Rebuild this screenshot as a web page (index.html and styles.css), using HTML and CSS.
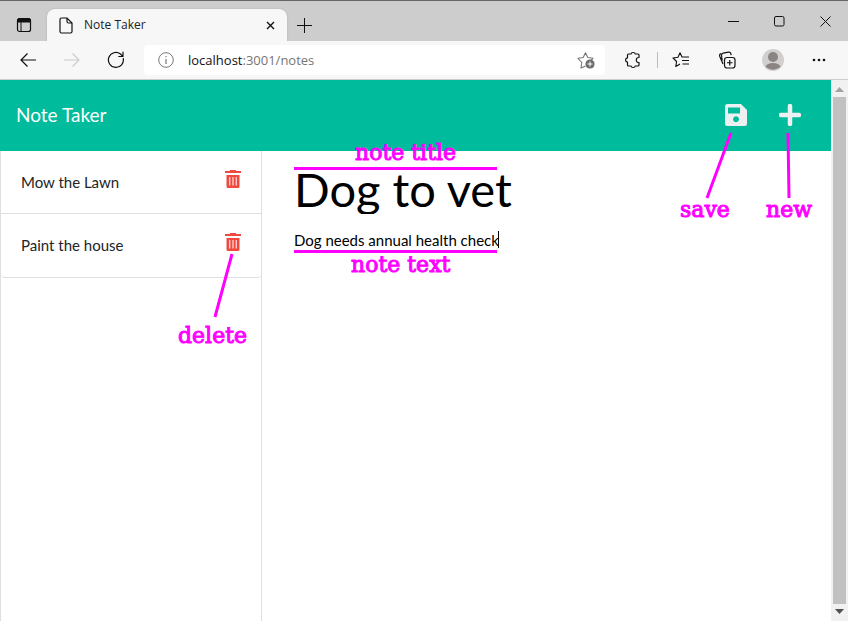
FILE: index.html
```html
<!DOCTYPE html>
<html lang="en">
<head>
<meta charset="utf-8">
<meta name="viewport" content="width=device-width, initial-scale=1">
<title>Note Taker</title>
<link rel="stylesheet" href="styles.css">
</head>
<body>
<div class="tabs">
  <button class="tab-menu" aria-label="Tab actions"><svg width="16" height="16" viewBox="0 0 16 16"><rect x="1.5" y="1.5" width="13" height="13" rx="2" fill="none" stroke="#111" stroke-width="1.2"/><path d="M1.500 5V3.500q0-2 2-2h9q2 0 2 2V5z" fill="#111" stroke="#111"/><path d="M5 5v9.500" stroke="#111"/></svg></button>
  <div class="tab">
    <svg width="14" height="17" viewBox="0 0 14 17" fill="none" stroke="#111" stroke-width="1.2"><path d="M2.500 1H8l5 5v8.500q0 1.500-1.500 1.500h-9Q1 16 1 14.500v-12Q1 1 2.500 1z"/><path d="M8 1v3.500Q8 6 9.500 6H13"/></svg>
    <span class="tab-name">Note Taker</span>
    <button class="tab-close" aria-label="Close tab"><svg width="9" height="9" viewBox="0 0 9 9"><path d="M1 1l7 7M8 1L1 8" stroke="#111" stroke-width="1.4"/></svg></button>
  </div>
  <button class="tab-new" aria-label="New tab"><svg width="15" height="15" viewBox="0 0 15 15"><path d="M7.500 0v15M0 7.500h15" stroke="#111"/></svg></button>
  <div class="window-buttons">
    <button aria-label="Minimize"><svg width="11" height="11" viewBox="0 0 11 11"><path d="M0 5.500h11" stroke="#111"/></svg></button>
    <button aria-label="Maximize"><svg width="11" height="11" viewBox="0 0 11 11"><rect x=".5" y=".5" width="9.500" height="9.500" rx="1.500" fill="none" stroke="#111"/></svg></button>
    <button aria-label="Close"><svg width="11" height="11" viewBox="0 0 11 11"><path d="M.5.5l10 10M10.500.5l-10 10" stroke="#111"/></svg></button>
  </div>
</div>
<div class="toolbar">
  <div class="nav-buttons">
    <button aria-label="Back"><svg width="18" height="18" viewBox="0 0 18 18" fill="none" stroke="#111" stroke-width="1.200"><path d="M17 9H2M8.500 2.500L2 9l6.500 6.500"/></svg></button>
    <button aria-label="Forward"><svg width="18" height="18" viewBox="0 0 18 18" fill="none" stroke="#ccc" stroke-width="1.200"><path d="M1 9h15M9.500 2.500L16 9l-6.500 6.500"/></svg></button>
    <button aria-label="Reload"><svg width="18" height="18" viewBox="0 0 18 18" fill="none" stroke="#111" stroke-width="1.200"><path d="M16.200 7.200A7.500 7.500 0 1 1 13.500 3L16 5.500M16 .8v4.700h-4.700"/></svg></button>
  </div>
  <div class="address">
    <svg width="16" height="16" viewBox="0 0 16 16"><circle cx="8" cy="8" r="7.300" fill="none" stroke="#777"/><path d="M8 7v5M8 4v1.300" stroke="#777" stroke-width="1.200"/></svg>
    <span class="url">localhost<span class="url-rest">:3001/notes</span></span>
    <button aria-label="Add to favorites"><svg width="18" height="18" viewBox="0 0 18 18"><path d="M8.500 15L4 17l.8-5.500L1 7.300l5.200-.8 2.300-4.800 2.300 4.800 5.200.8-2 2" fill="none" stroke="#777" stroke-width="1.100" stroke-linejoin="round"/><circle cx="13" cy="13" r="4.600" fill="#6c6c6c"/><path d="M13 10.500v5M10.500 13h5" stroke="#fff"/></svg></button>
  </div>
  <button class="tool" aria-label="Extensions"><svg width="18" height="18" viewBox="0 0 18 18"><path d="M4.500 3H7C7.300 1 11 1 11.300 3H14q1 0 1 1v2.500c-3.600-.4-3.600 5.400 0 5V14q0 1-1 1h-2.700c-.3 2-4 2-4.300 0H4.500q-1 0-1-1v-2.800c-2.600-.3-2.600-4.100 0-4.400V4q0-1 1-1z" fill="none" stroke="#111" stroke-width="1.200" stroke-linejoin="round"/></svg></button>
  <span class="divider"></span>
  <button class="tool" aria-label="Favorites"><svg width="18" height="18" viewBox="0 0 18 18" fill="none" stroke="#111" stroke-width="1.100"><path d="M8 13l-4.200 2.500.8-5L1 7l5-.7L8 1.700l2 4.300h7M10 9.500h7M10.500 13h6.500" stroke-linejoin="round"/></svg></button>
  <button class="tool" aria-label="Collections"><svg width="18" height="18" viewBox="0 0 18 18" fill="none" stroke="#111" stroke-width="1.200"><rect x="6.500" y="6.500" width="10.500" height="10.500" rx="2.500"/><path d="M11.750 9v5.500M9 11.750h5.500M5 13L1.800 5.500Q1 3.300 3 2.600M4.200 9.500L3.500 4.500q-.2-2 1.700-2.400L10.500 1.200q2-.3 2.400 1.600l.3 1.400"/></svg></button>
  <button class="tool" aria-label="Profile"><svg width="22" height="22" viewBox="0 0 22 22"><circle cx="11" cy="11" r="11" fill="#d2d0ce"/><circle cx="11" cy="8" r="5" fill="#8a8583"/><path d="M3.500 17.500Q5 14 11 14t7.500 3.500A10.500 10.500 0 0 1 3.500 17.500z" fill="#8a8583"/></svg></button>
  <button class="tool" aria-label="More"><svg width="14" height="4" viewBox="0 0 14 4" fill="#111"><circle cx="2" cy="2" r="1.300"/><circle cx="7" cy="2" r="1.300"/><circle cx="12" cy="2" r="1.300"/></svg></button>
</div>
<div class="viewport">
  <div class="page">
    <header class="navbar">
      <a class="brand" href="#">Note Taker</a>
      <div class="actions">
        <div class="anchor">
          <button aria-label="Save note"><svg width="22" height="22" viewBox="0 0 22 22"><path fill-rule="evenodd" d="M2.500 0H16l6 6v13.500q0 2.500-2.500 2.500h-17Q0 22 0 19.500v-17Q0 0 2.500 0zM3 3.500v6h12v-6zM11 12.300a3 3 0 1 0 .01 0z" fill="#ecf0f1"/></svg></button>
          <svg class="pointer pointer-save" width="30" height="70"><path d="M26 2L2 67"/></svg>
          <span class="note-label label-save">save</span>
        </div>
        <div class="anchor">
          <button aria-label="New note"><svg width="22" height="22" viewBox="0 0 22 22"><path d="M11 2v18M2 11h18" stroke="#ecf0f1" stroke-width="4.500" stroke-linecap="round"/></svg></button>
          <svg class="pointer pointer-new" width="6" height="70"><path d="M2 2l1 65"/></svg>
          <span class="note-label label-new">new</span>
        </div>
      </div>
    </header>
    <main class="columns">
      <aside class="sidebar">
        <ul class="notes">
          <li><span>Mow the Lawn</span><div class="anchor"><button aria-label="Delete Mow the Lawn"><svg width="16" height="18" viewBox="0 0 16 18"><path fill-rule="evenodd" d="M0 1h5V0h6v1h5v2H0zM1.500 5h13v11.500q0 1.500-1.500 1.500H3q-1.500 0-1.500-1.500zM4.300 7v8.500h1V7zM7.500 7v8.500h1V7zM10.700 7v8.500h1V7z" fill="#f1493e"/></svg></button></div></li>
          <li><span>Paint the house</span><div class="anchor"><button aria-label="Delete Paint the house"><svg width="16" height="18" viewBox="0 0 16 18"><path fill-rule="evenodd" d="M0 1h5V0h6v1h5v2H0zM1.500 5h13v11.500q0 1.500-1.500 1.500H3q-1.500 0-1.500-1.500zM4.300 7v8.500h1V7zM7.500 7v8.500h1V7zM10.700 7v8.500h1V7z" fill="#f1493e"/></svg></button>
            <svg class="pointer pointer-delete" width="22" height="68"><path d="M19 2L2 65"/></svg>
            <span class="note-label label-delete">delete</span></div></li>
        </ul>
      </aside>
      <section class="editor">
        <div class="field">
          <input class="title" aria-label="Note title" value="Dog to vet">
          <span class="rule rule-title"></span><span class="note-label label-title">note title</span>
        </div>
        <div class="field">
          <textarea class="body-text" rows="1" aria-label="Note text">Dog needs annual health check</textarea>
          <span class="caret"></span><span class="rule rule-text"></span><span class="note-label label-text">note text</span>
        </div>
      </section>
    </main>
  </div>
  <div class="scrollbar">
    <svg width="9" height="5" viewBox="0 0 9 5"><path d="M0 5L4.500 0 9 5z" fill="#a3a3a3"/></svg>
    <span class="thumb"></span>
    <svg width="9" height="5" viewBox="0 0 9 5"><path d="M0 0h9L4.500 5z" fill="#505050"/></svg>
  </div>
</div>
</body>
</html>
```
FILE: styles.css
```css
* { box-sizing: border-box; }
body {
  margin: 0;
  height: 100vh;
  display: flex;
  flex-direction: column;
  overflow: hidden;
  background: #fff;
  font: 15px/24px Lato, sans-serif;
  color: #212529;
}
button {
  display: flex;
  align-items: center;
  justify-content: center;
  padding: 0;
  border: 0;
  background: none;
}
svg { display: block; flex: none; }

.tabs {
  display: flex;
  height: 41px;
  flex: none;
  border-top: 1px solid #666;
  background: #cdcdcd;
  font: 12px/16px "Open Sans", sans-serif;
}
.tab-menu { width: 47px; padding-top: 8px; }
.tab {
  display: flex;
  align-items: center;
  width: 240px;
  margin-top: 8px;
  padding: 0 12px;
  border-radius: 8px 8px 0 0;
  background: #f7f7f7;
  box-shadow: 0 0 2px #aaa;
}
.tab-name { flex: 1; margin-left: 11px; color: #222; }
.tab-new { width: 35px; padding-top: 8px; }
.window-buttons { display: flex; margin-left: auto; }
.window-buttons button { width: 46px; }

.toolbar {
  display: flex;
  align-items: center;
  height: 39px;
  flex: none;
  padding-right: 6px;
  border-bottom: 1px solid #ccc;
  background: #f7f7f7;
}
.nav-buttons { display: flex; gap: 26px; margin: 0 19px; }
.address {
  flex: 1;
  display: flex;
  align-items: center;
  height: 30px;
  padding: 0 10px 0 14px;
  border-radius: 4px;
  background: #fff;
  font: 13px/20px "Open Sans", sans-serif;
}
.url { flex: 1; margin-left: 14px; color: #111; }
.url-rest { color: #767676; }
.tool { width: 46px; }
.address + .tool { width: 44px; margin-left: 6px; }
.divider { width: 1px; height: 16px; background: #bbb; margin-left: 2px; }

.viewport { flex: 1; min-height: 0; display: flex; }
.page { flex: 1; display: flex; flex-direction: column; }
.navbar {
  display: flex;
  align-items: center;
  justify-content: space-between;
  height: 71px;
  padding: 0 30px 2px 16px;
  background: #00bc9c;
}
.brand { color: #fff; font-size: 19px; text-decoration: none; }
.actions { display: flex; gap: 32px; }
.anchor { position: relative; }
.columns { flex: 1; display: flex; }
.sidebar {
  width: 262px;
  border: solid #dfdfdf;
  border-width: 0 1px;
}
.notes { margin: 0; padding: 0; list-style: none; }
.notes li {
  display: flex;
  align-items: flex-start;
  justify-content: space-between;
  padding: 19px 20px;
  border-bottom: 1px solid #dfdfdf;
}
.notes li:last-child { border-radius: 0 0 4px 4px; }
.notes li:last-child > span { margin-bottom: 1px; }

.editor { flex: 1; padding: 15px 32px; }
.field { position: relative; }
.title, .body-text {
  display: block;
  width: 100%;
  padding: 0;
  border: 0;
  outline: 0;
  background: none;
  color: #000;
  font-family: Lato, sans-serif;
}
.title { height: 48px; padding-bottom: 3px; margin-bottom: 14px; font-size: 47px; line-height: 45px; }
.body-text { font-size: 15px; line-height: 24px; resize: none; overflow: hidden; }
.caret { position: absolute; left: 204px; top: 3px; width: 1px; height: 17px; background: #000; }

.note-label {
  position: absolute;
  color: #f0f;
  font: 22px/26px "DejaVu Serif", serif;
  -webkit-text-stroke: 1px #f0f;
  white-space: nowrap;
}
.pointer { position: absolute; fill: none; stroke: #f0f; stroke-width: 3; }
.pointer-save { left: -20px; top: 27px; }
.pointer-new { left: 7px; top: 27px; }
.pointer-delete { left: -12px; top: 19px; }
.label-save { left: -45px; top: 93px; }
.label-new { left: -13px; top: 93px; }
.label-delete { left: -47px; top: 90px; }
.label-title { left: 61px; top: -26px; }
.label-text { left: 57px; top: 24px; }
.rule { position: absolute; left: 0; width: 203px; height: 3px; background: #f0f; }
.rule-title { top: 1px; }
.rule-text { top: 22px; }

.scrollbar {
  display: flex;
  flex-direction: column;
  align-items: center;
  gap: 5px;
  width: 17px;
  padding: 7px 0;
  background: #f1f1f1;
}
.thumb { flex: 1; width: 13px; background: #c1c1c1; }
```
